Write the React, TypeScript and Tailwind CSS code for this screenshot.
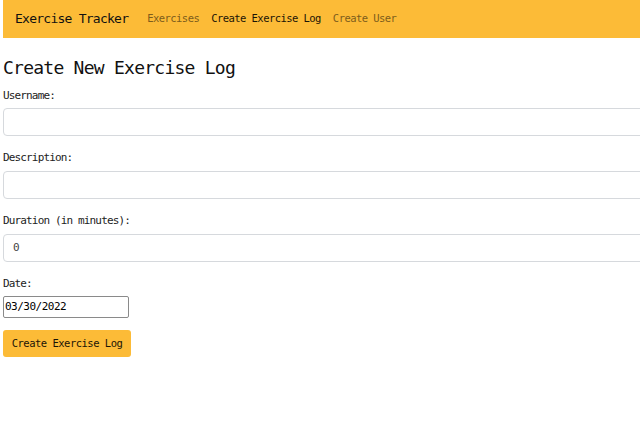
export default function App() {
  const mono = { fontFamily: '"DejaVu Sans Mono", "Liberation Mono", monospace' };

  return (
    <div className="w-screen h-screen overflow-hidden bg-white" style={mono}>
      <div className="w-[700px] pl-[3px]">
        {/* Navbar */}
        <nav className="h-[38px] bg-[#fcbb37] flex items-center pl-[12px]">
          <span className="text-[13px] tracking-[-0.75px] text-[#111]">Exercise Tracker</span>
          <div className="flex items-center ml-[19px] gap-[12px] text-[10.5px] tracking-[-0.55px]">
            <span className="text-[#7d5d1c]">Exercises</span>
            <span className="text-[#1a1406]">Create Exercise Log</span>
            <span className="text-[#7d5d1c]">Create User</span>
          </div>
        </nav>

        {/* Form */}
        <div className="pt-[19px]">
          <h3 className="text-[18px] leading-[22px] tracking-[-0.75px] text-[#111]">Create New Exercise Log</h3>

          <label className="block mt-[10px] text-[11px] leading-[14px] tracking-[-0.85px] text-[#222]">Username:</label>
          <div className="mt-[5px] h-[28px] w-full border border-[#d6d9dd] rounded-[4px] bg-white" />

          <label className="block mt-[15px] text-[11px] leading-[14px] tracking-[-0.85px] text-[#222]">Description:</label>
          <div className="mt-[6px] h-[28px] w-full border border-[#d6d9dd] rounded-[4px] bg-white" />

          <label className="block mt-[15px] text-[11px] leading-[14px] tracking-[-0.85px] text-[#222]">Duration (in minutes):</label>
          <div className="mt-[6px] h-[28px] w-full border border-[#d6d9dd] rounded-[4px] bg-white flex items-center pl-[9px] text-[11px] text-[#444]">
            0
          </div>

          <label className="block mt-[15px] text-[11px] leading-[14px] tracking-[-0.85px] text-[#222]">Date:</label>
          <div className="mt-[5px] h-[22px] w-[126px] border border-[#8a8a8a] rounded-[2px] bg-white flex items-center pl-[1px] text-[11px] tracking-[-0.5px] text-black">
            03/30/2022
          </div>

          <button className="mt-[12px] h-[27px] w-[128px] bg-[#fcbb37] rounded-[3px] text-[10.5px] tracking-[-0.5px] text-[#1a1406] flex items-center justify-center">
            Create Exercise Log
          </button>
        </div>
      </div>
    </div>
  );
}
